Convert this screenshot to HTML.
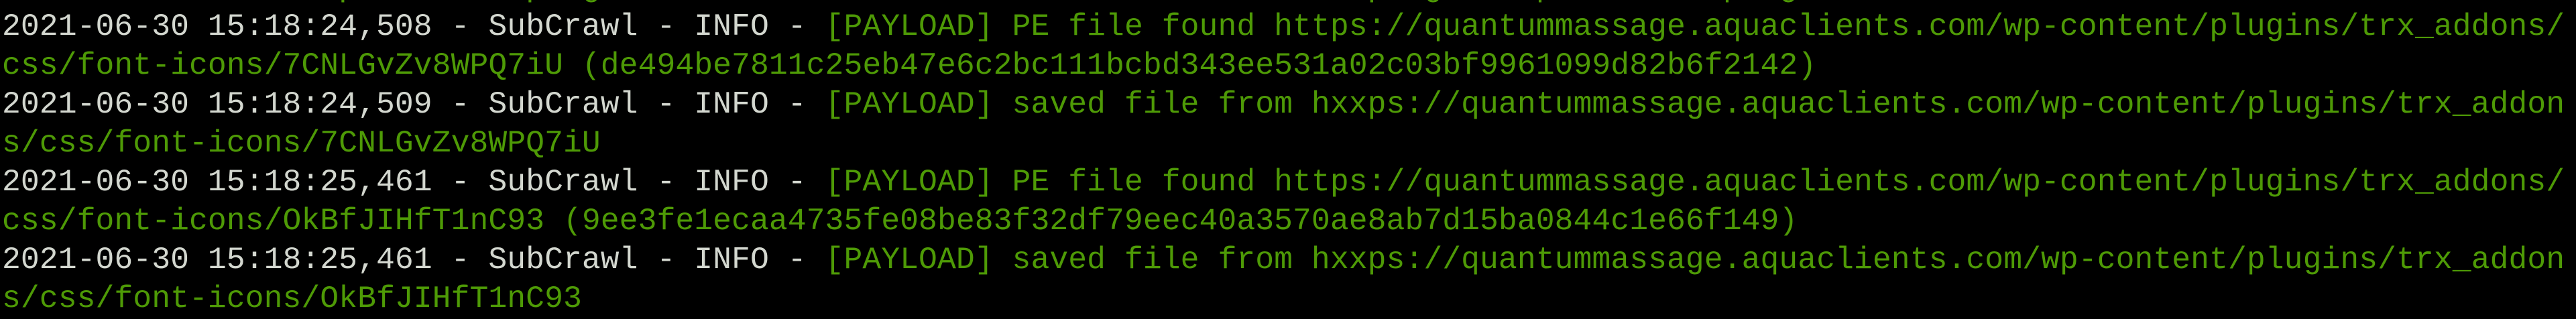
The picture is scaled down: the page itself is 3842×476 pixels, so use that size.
<!DOCTYPE html>
<html><head><meta charset="utf-8"><style>
html,body{margin:0;padding:0;background:#000;width:3842px;height:476px;overflow:hidden}
.l{position:absolute;left:3px;white-space:pre;font-family:"Liberation Mono","DejaVu Sans Mono",monospace;font-size:46.4px;line-height:58px;color:#d3d7cf;letter-spacing:0.06px}
.g{color:#4e9a06}
</style></head><body>
<div class="l g" style="top:-47px">s/css/font-icons/wp-content/plugins/trx_addons/css/font-icons/trx_addons_plugins_wp-content/plugins</div>
<div class="l" style="top:11px">2021-06-30 15:18:24,508 - SubCrawl - INFO - <span class="g">[PAYLOAD] PE file found https://quantummassage.aquaclients.com/wp-content/plugins/trx_addons/</span></div>
<div class="l g" style="top:69px">css/font-icons/7CNLGvZv8WPQ7iU (de494be7811c25eb47e6c2bc111bcbd343ee531a02c03bf9961099d82b6f2142)</div>
<div class="l" style="top:127px">2021-06-30 15:18:24,509 - SubCrawl - INFO - <span class="g">[PAYLOAD] saved file from hxxps://quantummassage.aquaclients.com/wp-content/plugins/trx_addon</span></div>
<div class="l g" style="top:185px">s/css/font-icons/7CNLGvZv8WPQ7iU</div>
<div class="l" style="top:243px">2021-06-30 15:18:25,461 - SubCrawl - INFO - <span class="g">[PAYLOAD] PE file found https://quantummassage.aquaclients.com/wp-content/plugins/trx_addons/</span></div>
<div class="l g" style="top:301px">css/font-icons/OkBfJIHfT1nC93 (9ee3fe1ecaa4735fe08be83f32df79eec40a3570ae8ab7d15ba0844c1e66f149)</div>
<div class="l" style="top:359px">2021-06-30 15:18:25,461 - SubCrawl - INFO - <span class="g">[PAYLOAD] saved file from hxxps://quantummassage.aquaclients.com/wp-content/plugins/trx_addon</span></div>
<div class="l g" style="top:417px">s/css/font-icons/OkBfJIHfT1nC93</div>
</body></html>
